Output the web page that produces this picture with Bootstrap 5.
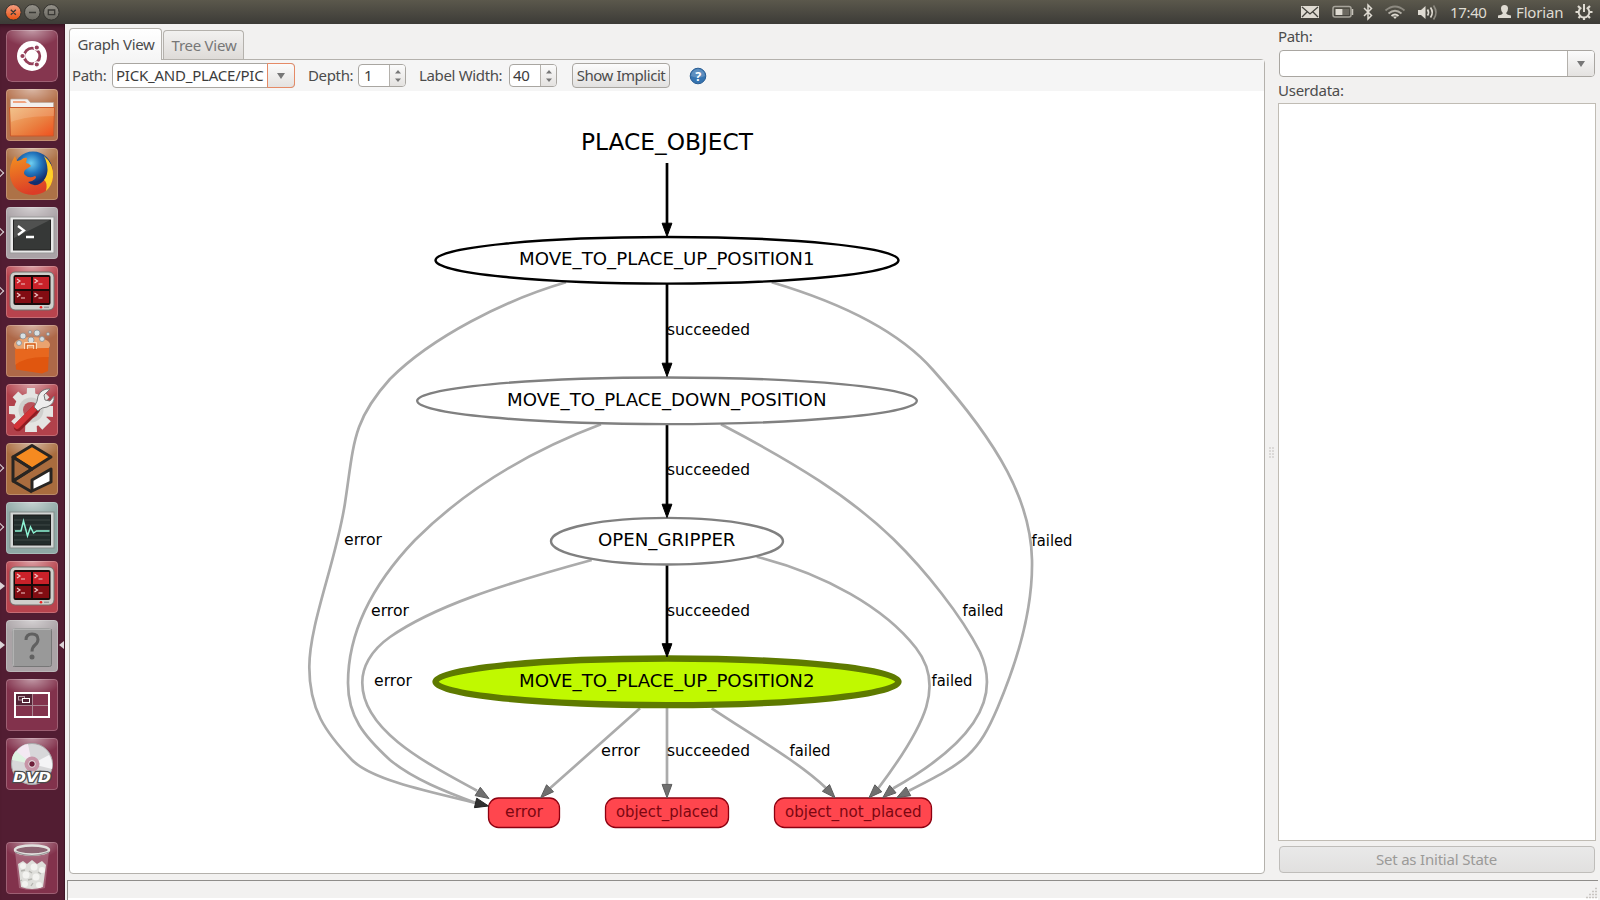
<!DOCTYPE html>
<html lang="en">
<head>
<meta charset="utf-8">
<title>State machine viewer</title>
<link href="https://cdn.jsdelivr.net/npm/bootstrap@5.3.0/dist/css/bootstrap.min.css" rel="stylesheet">
<script src="https://cdn.jsdelivr.net/npm/bootstrap@5.3.0/dist/js/bootstrap.bundle.min.js"></script>
<style>
body{width:1600px;height:900px;overflow:hidden;background:#f2f1f0;color:#4c4c4c;font:15px/20px "Noto Sans","Open Sans",sans-serif;letter-spacing:-.35px}
svg{display:block;flex:none}
.topbar{height:24px;background:linear-gradient(#5b584c,#3c3b37);color:#dfdbd2;padding-left:5px;padding-right:7px}
.launcher{width:65px;background:#521d32;padding:6px 0 0 6px;gap:7px;box-shadow:inset 0 5px 5px -4px #2a0d18,inset -1px 0 #3f1527}
.tile{width:52px;height:52px;position:relative;border-radius:4px;box-shadow:inset 0 0 0 1px #ffffff38;background:radial-gradient(ellipse 30px 17px at 50% 0,#ffffff80,#ffffff00),var(--c,#82324c)}
.tile.ubu{border-radius:6px}
.tile.open::before,.tile.live::before,.tile.sel::after{content:"";position:absolute;left:-6px;top:21px;border:4.5px solid transparent;border-left:5px solid #dcd3d7;border-right:0}
.tile.open::before{border:0;width:6px;height:6px;top:22px;left:-9px;border-top:1.4px solid #dcd3d7;border-right:1.4px solid #dcd3d7;transform:rotate(45deg)}
.tile.sel::after{left:auto;right:-6px;border-right:5px solid #dcd3d7;border-left:0}
.viewtab{border:1px solid #b4b1ac;border-bottom:0;border-radius:4px 4px 0 0;text-align:center;white-space:nowrap}
.viewtab.on{width:93px;height:32px;background:linear-gradient(#fff,#f5f5f5);padding:5px 0 0 1px;margin-bottom:-1px;z-index:1}
.viewtab.off{width:81px;height:29px;background:linear-gradient(#f2f1f0,#dedbd8);padding:4px 0 0 1px;letter-spacing:-.25px;color:#777;margin-left:1px}
.panel{border:1px solid #b4b1ac;border-radius:0 4px 4px 4px;width:1196px;height:815px;background:#fff}
.tools{height:31px;background:#f5f5f5;padding-left:2px}
.cap{position:relative;padding-bottom:1px}
.fld{border:1px solid #a9a6a1;border-radius:4px;background:#fff;color:#3c3c3c;overflow:hidden;white-space:nowrap}
.fld>span{flex:1;padding-left:3px}
.arrowbtn{background:linear-gradient(#fbfbfb,#e4e2e0);border-left:1px solid #b4b1ac;display:flex;align-items:center;justify-content:center}
.hot{border:1.5px solid #e58a66;margin:-1px;border-radius:0 4px 4px 0}
.gbtn{border:1px solid #a9a6a1;border-radius:4px;background:linear-gradient(#fcfcfc,#e2e1e0);text-align:center;white-space:nowrap}
.side{width:318px}
.status{border:1px solid #8f8d8a;border-right:0;border-bottom:0;margin-left:2px;width:1531px;height:20px;box-shadow:inset 0 -2px #fff}
.graph text{font-family:"DejaVu Sans",sans-serif;letter-spacing:0;fill:#000}
.graph .fin text{fill:#7c0711}
</style>
</head>
<body class="d-flex flex-column">
<header class="topbar d-flex align-items-center flex-shrink-0">
<svg width="60" height="24" viewBox="5 0 60 24">
<defs><linearGradient id="gx" x2="0" y2="1"><stop stop-color="#f7a083"/><stop offset="1" stop-color="#e6500f"/></linearGradient><linearGradient id="gy" x2="0" y2="1"><stop stop-color="#96938b"/><stop offset="1" stop-color="#68665f"/></linearGradient></defs>
<g stroke="#33322e"><circle cx="13.3" cy="12.3" r="7.8" fill="url(#gx)"/><circle cx="32.3" cy="12.3" r="7.8" fill="url(#gy)"/><circle cx="51.3" cy="12.3" r="7.8" fill="url(#gy)"/></g>
<path d="M10.8 9.8l5 5m0-5l-5 5M29 12.5h7M48.3 10h6.4v4.6h-6.4z" fill="none" stroke="#3a3935" stroke-width="1.3"/></svg>
<svg class="ms-auto" width="155" height="24" viewBox="1295 0 155 24">
<rect x="1301" y="6" width="18" height="12" fill="#dfdbd2"/><path d="M1302 7l8 7 8-7M1302 17l5-5m11 5l-5-5" fill="none" stroke="#45443e" stroke-width="1.3"/>
<rect x="1333" y="6.5" width="18" height="10.5" rx="2" fill="none" stroke="#a7a49b" stroke-width="1.5"/><rect x="1335.5" y="9" width="7" height="6" fill="#dfdbd2"/><rect x="1343" y="9" width="6" height="6" fill="#6b685f"/><path d="M1352.5 9v6" stroke="#c7c3ba" stroke-width="1.5"/>
<path d="M1364 8l7.5 7.5-3.5 3.5V5l3.5 3.5L1364 16" fill="none" stroke="#dfdbd2" stroke-width="1.5"/>
<g fill="none" stroke="#8c8980" stroke-width="1.8"><path d="M1385.5 10.5q9.5-8 19 0"/><path d="M1388.5 13.5q6.500-5.500 13 0" stroke="#b5b1a8"/><path d="M1391.500 16q3.500-3 7 0" stroke="#dfdbd2"/></g><path d="M1392.800 16.500h4.400l-2.200 2.500z" fill="#dfdbd2"/>
<path d="M1418 10h3l4.500-4v13l-4.500-4h-3z" fill="#dfdbd2"/><path d="M1427.500 9.500q2 3 0 6M1430.500 7.500q3.500 5 0 10" fill="none" stroke="#dfdbd2" stroke-width="1.7"/><path d="M1433.500 5.500q5 7 0 14" fill="none" stroke="#8c8980" stroke-width="1.7"/></svg>
<span class="cap" style="width:47px">17:40</span>
<svg width="19" height="24" viewBox="1497 0 19 24"><path d="M1501 8.500q0-3.500 3.500-3.500t3.500 3.500q0 3-1.800 4.500 0 1.800 4.800 2.500v2.500h-13v-2.500q4.800-.7 4.800-2.500-1.800-1.500-1.800-4.500z" fill="#dfdbd2"/></svg>
<span class="cap" style="width:59px;letter-spacing:-.15px">Florian</span>
<svg width="18" height="24" viewBox="1575 0 18 24"><g fill="none" stroke="#dfdbd2"><path d="M1581.300 7.600a5.300 5.300 0 1 0 5.400 0" stroke-width="1.900"/><path d="M1584 4v8" stroke-width="2"/><path d="M1580 8l-2-2m10 2l2-2m-12 6h-2.500m17 0h-2.500m-9.500 4l-2 2m9.500-2l2 2m-6-1v3" stroke-width="2.200"/></g></svg>
</header>

<div class="d-flex flex-grow-1">
<nav class="launcher d-flex flex-column flex-shrink-0">
<div class="tile ubu" style="--c:#85364f"><svg width="52" height="52"><circle cx="26" cy="26" r="15" fill="#fff"/><circle cx="26" cy="26" r="7.800" fill="none" stroke="#94405a" stroke-width="2.800"/><g fill="#94405a" stroke="#fff" stroke-width="1.200"><circle cx="16.500" cy="26" r="2.700"/><circle cx="30.800" cy="17.500" r="2.700"/><circle cx="30.800" cy="34.500" r="2.700"/></g></svg></div>
<div class="tile" style="--c:#b5714c"><svg width="52" height="52"><defs><linearGradient id="fo" x1="0" y1="0" x2="1" y2="1"><stop stop-color="#f0b877"/><stop offset=".6" stop-color="#ea7e3f"/><stop offset="1" stop-color="#ef4f1d"/></linearGradient></defs><path d="M4.500 46V11q0-1 1-1h16l3 3.500h23V46z" fill="#f3efec" stroke="#b9a79b" stroke-width=".7"/><path d="M7 12h12l2 2H7z" fill="#f0a47f"/><path d="M3.500 18.500h45L47.500 47H4.500z" fill="url(#fo)" stroke="#c9592a"/><path d="M4 19h44v8Q20 27 5 33z" fill="#fff" opacity=".15"/></svg></div>
<div class="tile open" style="--c:#ad7247"><svg width="52" height="52"><defs><radialGradient id="fb" cx=".45" cy=".3"><stop stop-color="#6fd0f2"/><stop offset=".5" stop-color="#2378bf"/><stop offset="1" stop-color="#132e6f"/></radialGradient><linearGradient id="ff" x2=".3" y2="1"><stop stop-color="#f39020"/><stop offset="1" stop-color="#dc3d27"/></linearGradient></defs><circle cx="27" cy="23" r="19.500" fill="url(#fb)"/><path d="M38 8q11 10 9 22-3 16-20 17Q7 46 4 28q-1-11 5-20l2 5 4-1q3-3 6-2l-1 5q3 0 5 3l-6 4q-2 3 0 5 4 4 10 1 2 1 0 3-3 3-7 3 6 6 13 1 8-6 7-15 2-7-4-12z" fill="url(#ff)"/><path d="M38 8q10 8 9 21-1 9-7 14 2-8-2-11 7-9 0-24z" fill="#ffcf27"/></svg></div>
<div class="tile open" style="--c:#aaa2a6"><svg width="52" height="52"><rect x="4" y="10" width="44" height="36" fill="#e9e9e9" stroke="#999"/><rect x="7.500" y="13" width="37" height="30" fill="#363837" stroke="#222"/><path d="M8 13h36L8 31z" fill="#fff" opacity=".13"/><path d="M12 19l6 4.500-6 4.500M20 30h8" fill="none" stroke="#fff" stroke-width="2.300"/></svg></div>
<div class="tile open" style="--c:#b8434d"><svg width="52" height="52"><use href="#tmx"/></svg></div>
<div class="tile" style="--c:#ae6848"><svg width="52" height="52"><ellipse cx="26" cy="20" rx="18" ry="8" fill="#f8b27a" opacity=".8"/><g fill="#d8e0e3" stroke="#8a8e92" stroke-width=".8"><circle cx="17" cy="11" r="3"/><circle cx="25" cy="15" r="3"/><circle cx="31" cy="8" r="3"/><circle cx="36" cy="14" r="2.500"/><circle cx="13" cy="18" r="2.500"/><circle cx="42" cy="9" r="1.500"/><circle cx="24" cy="7" r="1.500"/></g><path d="M9 24l34-1-1 23-6 2.500-26-4z" fill="#e0560f"/><path d="M9 24l34-1v9Q20 31 9 40z" fill="#f0782d" opacity=".5"/><path d="M20 24v-5h9v5" fill="none" stroke="#fff0d8" stroke-width="3.500"/><path d="M20 25v-6h9v6" fill="none" stroke="#d4560f" stroke-width="1.500"/></svg></div>
<div class="tile" style="--c:#b1414b"><svg width="52" height="52"><g fill="#e4e4e2"><circle cx="25" cy="26" r="17"/><path d="M25 26m-4-22h8l2 44H19zM3 22v8l44 3V22z"/><path d="M25 26m-4-22h8l2 44H19z" transform="rotate(45 25 26)"/><path d="M25 26m-4-22h8l2 44H19z" transform="rotate(-45 25 26)"/></g><circle cx="25" cy="26" r="12.500" fill="#cfcfcd"/><circle cx="25" cy="26" r="8" fill="#b7525b"/><path d="M30 25L12 43" stroke="#8f1c22" stroke-width="8.500" stroke-linecap="round"/><path d="M29 24L11 42" stroke="#d33338" stroke-width="6" stroke-linecap="round"/><path d="M28 23q4-6 4-11 4-8 12-7l-6 6 1 5 5 1 4-5q1 8-7 11-5 0-9 4z" fill="#eee" stroke="#777"/></svg></div>
<div class="tile open" style="--c:#a96c3e"><svg width="52" height="52"><g stroke="#282522" stroke-width="3" stroke-linejoin="round"><path d="M7 14L26 2.500 45 14 26 26z" fill="#f58a20"/><path d="M7 14l19 12L7 38z" fill="none"/><path d="M7 38l19-12M7 38l19 11" fill="none"/><path d="M26 37l19-11v13L26 48z" fill="#fff"/></g></svg></div>
<div class="tile open" style="--c:#8fa8a5"><svg width="52" height="52"><rect x="4" y="10" width="44" height="36" fill="#d3d6d5" stroke="#848b89"/><rect x="7.500" y="13" width="37" height="30" fill="#222c2b" stroke="#1b1b1b"/><path d="M8 18h36M8 23h36M8 28h36M8 33h36M8 38h36" stroke="#48514f" stroke-width=".8"/><path d="M9 29h6l2.500-10 4 15 3-9 3 6 3-2h13" fill="none" stroke="#8df3d4" stroke-width="1.500"/></svg></div>
<div class="tile live" style="--c:#b8434d"><svg width="52" height="52"><g id="tmx"><rect x="4" y="6" width="44" height="38" rx="5" fill="#cfcfcb" stroke="#70706c"/><rect x="7.500" y="9" width="37" height="30" rx="2" fill="#190a0a"/><path d="M9 11h16v12H9zM27 11h16v12H27z" fill="#c92129"/><path d="M9 25h16v12H9zM27 25h16v12H27z" fill="#820c12"/><path d="M11 13l3 2-3 2m4 1h4M28.500 13l3 2-3 2m4 1h4M11 27l3 2-3 2m4 1h4M28.500 27l3 2-3 2m4 1h4" fill="none" stroke="#f0c8c8" stroke-width="1.200"/><circle cx="35" cy="41.300" r="1.300" fill="#f02020"/><path d="M38 41.300h5" stroke="#999" stroke-width="1.500"/></g></svg></div>
<div class="tile live sel" style="--c:#aaa3a6"><svg width="52" height="52"><rect x="6.500" y="8.500" width="39" height="38" rx="2" fill="#999" stroke="#777"/><path d="M7 9h38M7 9v37" stroke="#ccc"/><path d="M20 20q0-6 6-6t6 5.500q0 3-3 5.500-3 2.500-3 6.500" fill="none" stroke="#606060" stroke-width="3"/><circle cx="26" cy="37" r="2.500" fill="#606060"/></svg></div>
<div class="tile"><svg width="52" height="52"><rect x="9" y="14" width="17" height="12" fill="#532436"/><path d="M26.500 14v24M9 26.500h34" stroke="#aa8793" stroke-width="1"/><rect x="9" y="14" width="34" height="24" fill="none" stroke="#fff" stroke-width="2"/><rect x="12.500" y="17.500" width="6" height="3.500" fill="none" stroke="#bb9eaa"/><rect x="16.500" y="19.500" width="7" height="4" fill="#532436" stroke="#fff"/></svg></div>
<div class="tile"><svg width="52" height="52"><circle cx="26" cy="26" r="20.500" fill="#d7d7d9" stroke="#a9a9aa"/><path d="M26 26L10 14q6-8 12-8z" fill="#f4e9f3"/><path d="M26 26L6 22q0-5 4-9z" fill="#dff3e2"/><path d="M26 26l20 5q1-9-3-14z" fill="#f4f4f6"/><circle cx="26" cy="26" r="7.500" fill="#c795a7"/><circle cx="26" cy="26" r="3.300" fill="#6e1f3a" stroke="#eee"/><text x="26" y="43.500" text-anchor="middle" textLength="38" lengthAdjust="spacingAndGlyphs" font-family="DejaVu Sans" font-size="14.500" font-weight="bold" font-style="italic" letter-spacing="0" fill="#fff" stroke="#4b4b4b" stroke-width="2.600" paint-order="stroke">DVD</text></svg></div>
<div class="tile" style="margin-top:45px"><svg width="52" height="52"><path d="M9 9h34l-4 37q-13 4-26 0z" fill="#c99aa8" opacity=".45"/><path d="M12 22l5-3 4 3 5-4 5 4 5-3 4 4-3 22q-11 4-22 0z" fill="#dededa"/><g fill="#f3f3f0"><circle cx="17" cy="24" r="3"/><circle cx="28" cy="25" r="3.500"/><circle cx="36" cy="28" r="3"/><circle cx="20" cy="33" r="3.500"/><circle cx="30" cy="35" r="3.500"/><circle cx="19" cy="42" r="3"/><circle cx="33" cy="43" r="3"/></g><path d="M15 29l4-1m4 1l3 2m-4 7l4-1m6-7l3 2m-8 9l-2 3m-9-6l-2 1" fill="none" stroke="#b5b5b0" stroke-width="1.300"/><ellipse cx="26" cy="8" rx="17" ry="4.500" fill="#8d6573" stroke="#e2e2df" stroke-width="2.500"/><path d="M9 10q17 7 34 0" fill="none" stroke="#999" stroke-width="1.200"/></svg></div>
</nav>

<div class="d-flex flex-column">
<div class="d-flex" style="height:856px">
<main style="padding:4px 0 0 4px;width:1200px">
<div class="d-flex align-items-end"><div class="viewtab on position-relative">Graph View</div><div class="viewtab off">Tree View</div></div>
<section class="panel">
<div class="tools d-flex align-items-center">
<span class="cap" style="width:40px">Path:</span>
<div class="fld d-flex" style="width:183px;height:25px;line-height:22px;overflow:visible"><span style="letter-spacing:-.22px">PICK_AND_PLACE/PIC</span><i class="arrowbtn hot" style="width:28px"><svg width="8" height="6"><path d="M0 0h8L4 6z" fill="#777"/></svg></i></div>
<span class="cap" style="width:50px;margin-left:13px">Depth:</span>
<div class="fld d-flex" style="width:48px;height:23px;line-height:20px"><span style="padding-left:5px">1</span><i class="arrowbtn" style="width:16px"><svg width="6" height="12"><path d="M0 3.500L3 0l3 3.500zM0 8.500L3 12l3-3.500z" fill="#777"/></svg></i></div>
<span class="cap" style="width:90px;margin-left:13px">Label Width:</span>
<div class="fld d-flex" style="width:48px;height:23px;line-height:20px"><span>40</span><i class="arrowbtn" style="width:16px"><svg width="6" height="12"><path d="M0 3.500L3 0l3 3.500zM0 8.500L3 12l3-3.500z" fill="#777"/></svg></i></div>
<div class="gbtn" style="width:98px;height:25px;line-height:22px;letter-spacing:-.45px;margin-left:15px">Show Implicit</div>
<svg width="18" height="18" style="margin-left:19px"><circle cx="9" cy="9" r="7.800" fill="#3674b0" stroke="#2a5d93"/><path d="M2 9a7 7 0 0 1 14 0q-7 3-14 0z" fill="#fff" opacity=".2"/><text x="9" y="13.500" text-anchor="middle" font-size="12.500" font-weight="bold" fill="#fff">?</text></svg>
</div>
<svg class="graph" id="graph" width="1194" height="782" viewBox="70 91 1194 782">
<g fill="none" stroke-width="2.700" stroke="#ababab">
<path stroke="#000" d="M667 163V224M667 284V364M667 425V505M667 565V645"/>
<path d="M566 282.300C505 300 432 337 390 379C352 421 354 444 345 503C336 562 309.500 623 309.300 667C309.300 709 325 732 352 760C372 780 430 792 476 803"/>
<path d="M601 424.300C530 451 465 490 415 540C372 585 348 633 348 683C348 717 364 736 390 760C413 779 446 792 476 803"/>
<path d="M591.700 560C500 585 433 607 390 637C370 651 362 668 362.300 683C362.500 731 428 764 477 790.700"/>
<path d="M640 708.300L550 788.300M667 708V785M711.700 708.300C755 737 800 763 826 788"/>
<path d="M756.700 556.700C825 574 885 608 916 648C944 684 928 722 878.300 788.300"/>
<path d="M721 424.300C795 463 850 497 893.300 539C925 570 961 615 980 652C1003 702 968 746 893 788.500"/>
<path d="M771.700 282.300C838 302 898 330 933 370C1000 445 1031 502 1032 560C1033 610 1017 662 998 706.700C978 754 966 762 909 790.700"/>
</g>
<g fill="#fff" stroke-width="2.400"><ellipse cx="667" cy="260.300" rx="231.500" ry="23.300" stroke="#000"/><ellipse cx="667" cy="400.800" rx="249.800" ry="23.300" stroke="#808080"/><ellipse cx="667" cy="541.200" rx="116" ry="23.300" stroke="#808080"/><ellipse cx="667" cy="681.800" rx="231.500" ry="23.300" fill="#c0f900" stroke="#5e7a00" stroke-width="6.300"/></g>
<g class="fin" fill="#ff464e" stroke="#8d0010" stroke-width="1.300"><rect x="488.500" y="798" width="71" height="29.500" rx="10"/><rect x="605.500" y="798" width="123" height="29.500" rx="10"/><rect x="774.500" y="798" width="157" height="29.500" rx="10"/></g>
<g id="tips"></g>
<g id="labels"></g>
<g class="fin" id="finals"></g>
</svg>
</section>
</main>
<div class="d-flex align-items-center justify-content-center" style="width:13px"><svg width="5" height="11"><path d="M0 1h2m1 0h2M0 4h2m1 0h2M0 7h2m1 0h2M0 10h2m1 0h2" stroke="#c4c1bd" stroke-width="1.200"/></svg></div>
<aside class="side d-flex flex-column">
<div style="height:26px;padding-top:2px">Path:</div>
<div class="fld d-flex" style="height:27px;margin:0 1px"><span></span><i class="arrowbtn" style="width:27px"><svg width="8" height="6"><path d="M0 0h8L4 6z" fill="#777"/></svg></i></div>
<div style="height:26px;padding-top:3px;letter-spacing:-.25px">Userdata:</div>
<div style="height:738px;border:1px solid #c0bcb4;background:#fff"></div>
<div class="gbtn" style="margin:5px 1px 0;height:27px;line-height:25px;letter-spacing:-.2px;padding-right:1px;color:#9b9a98;background:linear-gradient(#e9e9e9,#e1e0df);border-color:#bfbdba">Set as Initial State</div>
</aside>
</div>
<footer class="status d-flex justify-content-end align-items-end"><svg width="14" height="14"><path d="M11 2.500h2M8 5.500h2m1 0h2M5 8.500h2m1 0h2m1 0h2M2 11.500h2m1 0h2m1 0h2m1 0h2" stroke="#c9c6c2" stroke-width="1.500"/></svg></footer>
</div>
</div>
<script>
const NS='http://www.w3.org/2000/svg';
function put(parent,tag,attrs,text){const e=document.createElementNS(NS,tag);for(const k in attrs)e.setAttribute(k,attrs[k]);if(text)e.textContent=text;document.getElementById(parent).appendChild(e);}
// Arrow heads: end of the line, tip, fill, outline
const K=['#000','#000'],G=['#707070','#5c5c5c'],D=['#303030','#222'];
[[667,224,667,236.500,K],[667,364,667,376.500,K],[667,505,667,517.500,K],[667,645,667,657,K],
[476,803,488.500,806,D],[477,791,489,798.500,G],[550,788.300,540.700,797.700,G],[667,785,667,797.700,G],[826,788,835,797.700,G],
[878.300,788.300,869,797.700,G],[893,789,882.700,797.700,G],[909,791,896.700,797.700,G]
].forEach(([x,y,tx,ty,c])=>{
 const n=Math.hypot(tx-x,ty-y),ux=(tx-x)/n,uy=(ty-y)/n,bx=tx-ux*13.300,by=ty-uy*13.300;
 put('tips','polygon',{points:`${tx},${ty} ${bx-uy*4.900},${by+ux*4.900} ${bx+uy*4.900},${by-ux*4.900}`,fill:c[0],stroke:c[1]});
});
// Captions: x, baseline, width, font size, text
[[581,149.500,172,22.500,'PLACE_OBJECT'],[519,265,295.500,17.700,'MOVE_TO_PLACE_UP_POSITION1'],[507,406,319.500,17.700,'MOVE_TO_PLACE_DOWN_POSITION'],[598,546,137.500,17.700,'OPEN_GRIPPER'],[519,687,295.500,17.700,'MOVE_TO_PLACE_UP_POSITION2'],
[667,334.700,83,15.300,'succeeded'],[667,475,83,15.300,'succeeded'],[667,616,83,15.300,'succeeded'],[667,756,83,15.300,'succeeded'],
[344,545,38,15.300,'error'],[371,616,38,15.300,'error'],[374,686,38,15.300,'error'],[601,756,39,15.300,'error'],
[1031.500,546,41,15.300,'failed'],[962.500,616,41,15.300,'failed'],[931.500,686,41,15.300,'failed'],[789.500,756,41,15.300,'failed']
].forEach(([x,y,w,s,t])=>put('labels','text',{x,y,textLength:w,lengthAdjust:'spacingAndGlyphs','font-size':s},t));
[[505,38,'error'],[616,102.500,'object_placed'],[785,136.500,'object_not_placed']].forEach(([x,w,t])=>put('finals','text',{x,y:817,textLength:w,lengthAdjust:'spacingAndGlyphs','font-size':15.300},t));
</script>
</body>
</html>
